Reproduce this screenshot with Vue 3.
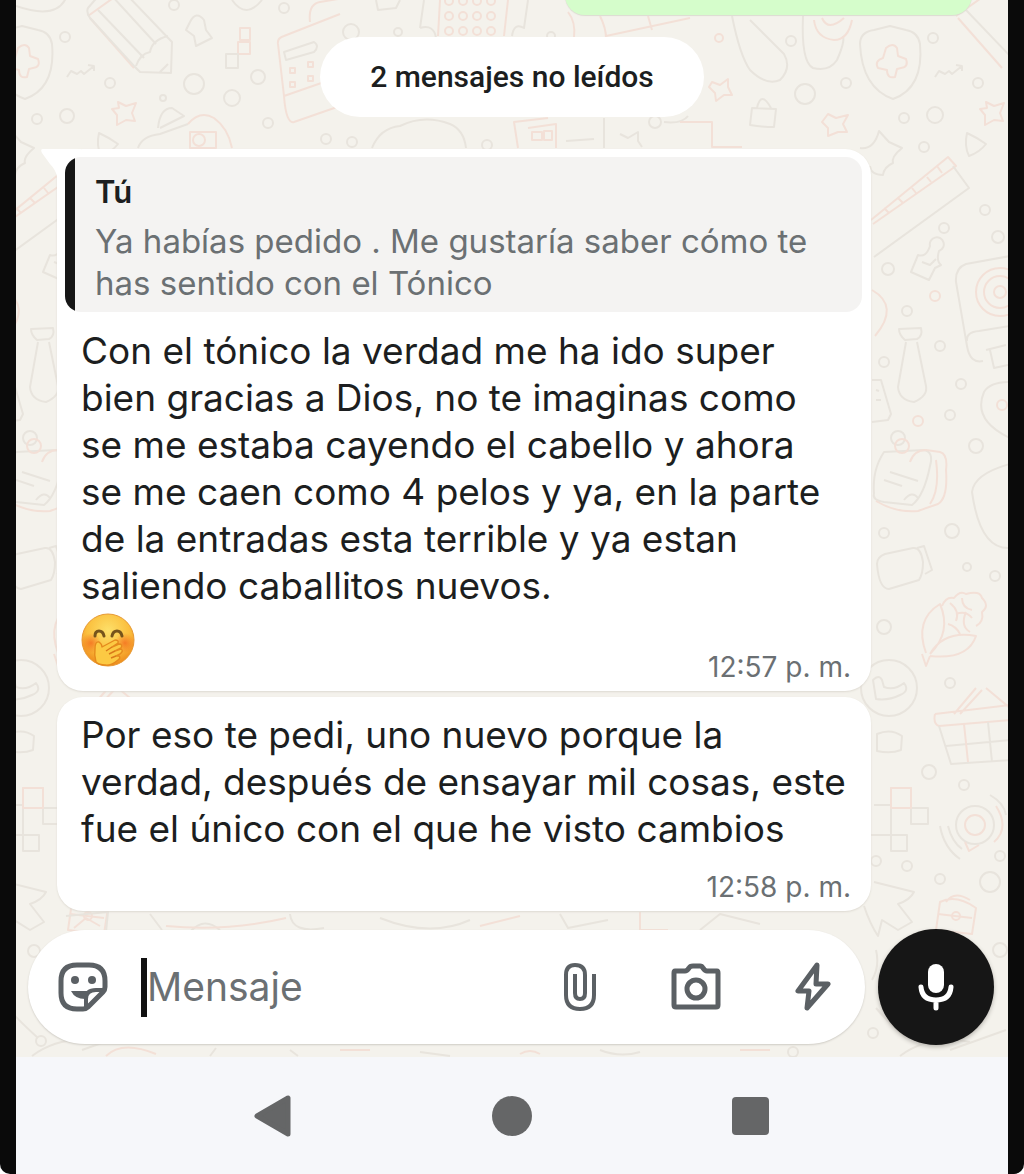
<script setup>
import { ref } from 'vue'

const texto = ref('')

const mensajes = [
  {
    id: 1,
    cita: {
      autor: 'Tú',
      lineas: ['Ya habías pedido . Me gustaría saber cómo te', 'has sentido con el Tónico']
    },
    lineas: [
      'Con el tónico la verdad me ha ido super',
      'bien gracias a Dios, no te imaginas como',
      'se me estaba cayendo el cabello y ahora',
      'se me caen como 4 pelos y ya, en la parte',
      'de la entradas esta terrible y ya estan',
      'saliendo caballitos nuevos.'
    ],
    emoji: true,
    hora: '12:57 p. m.'
  },
  {
    id: 2,
    cita: null,
    lineas: [
      'Por eso te pedi, uno nuevo porque la',
      'verdad, después de ensayar mil cosas, este',
      'fue el único con el que he visto cambios'
    ],
    emoji: false,
    hora: '12:58 p. m.'
  }
]

// x, y, radio
const burbujas = [
  [110, 83, 5], [67, 116, 7], [37, 119, 5], [194, 84, 10], [232, 98, 8], [258, 77, 7],
  [268, 123, 5], [65, 37, 5], [174, 5, 5], [284, 8, 5], [326, 139, 5], [163, 98, 3],
  [351, 32, 8], [398, 32, 4], [352, 142, 5], [487, 145, 5], [551, 36, 4], [655, 122, 6],
  [791, 41, 5], [805, 94, 10], [846, 83, 5], [933, 38, 5], [904, 118, 5], [935, 115, 8],
  [978, 83, 5], [924, 147, 5], [985, 210, 5], [944, 228, 5], [888, 269, 6], [907, 311, 5],
  [998, 237, 6], [940, 346, 5], [884, 362, 5], [961, 384, 5], [950, 415, 5], [976, 446, 7],
  [952, 531, 7], [884, 533, 5], [967, 567, 4], [995, 576, 5], [884, 627, 7], [950, 683, 5],
  [929, 772, 7], [964, 785, 5], [876, 861, 5], [907, 866, 5], [940, 879, 5], [990, 882, 10],
  [1000, 856, 5], [873, 1033, 5], [1000, 950, 7], [34, 951, 6], [41, 1041, 5], [793, 1052, 5]
]
const rosas = [[935, 296, 5], [918, 421, 5], [719, 38, 4]]
</script>

<template>
  <div class="telefono">
    <main class="chat">
      <svg class="fondo" aria-hidden="true">
        <defs>
          <g id="dibujos">
            <path d="M860 44 Q860 32 874 30 L890 26 L906 30 Q918 32 920 44 Q924 88 893 99 Q862 88 860 44z" />
            <path class="rosa" d="M886 48 q7 -6 11 0 l1 8 8 3 q3 8 -5 9 l-4 1 -2 8 q-8 2 -8 -7 l-9 -2 q-4 -7 5 -10z" />
            <path d="M935 77 l4 -6 6 3 4 -3 3 3 10 -8 -6 -1 M962 66 l0 5" />
            <path class="rosa" d="M956 16 L984 -4 M958 18 L1002 68" />
            <path d="M966 10 L1012 58" />
            <path class="rosa" d="M986 102 l8 4 10 -3 -4 10 3 8 -9 -1 -9 5 0 -10 -5 -6 7 -1z" />
            <path d="M967 133 q9 4 19 11 q-6 8 -17 12 q-5 -10 -2 -23z" />
            <path d="M860 148 q14 2 19 -17 l10 11 13 6 q-11 9 -9 15 -9 4 -10 12 -12 0 -13 -9" />
            <path class="rosa" d="M871 220 L948 157 L956 166 L873 224 M884 208 l5 5 M898 198 l5 5 M912 188 l4 5 M927 177 l4 5 M937 166 l5 7" />
            <path d="M953 166 L969 188 L874 257" />
            <path d="M918 255 q8 3 12 -9 a7 7 0 1 1 9 5 q-3 10 2 14 l-6 3 -6 12 -18 -8z M922 262 l8 3 6 -6" />
            <path d="M1010 256 L966 264 Q955 268 956 282 L967 346 Q970 364 983 361 M967 341 Q966 332 979 331 L1010 326 M986 350 l20 -5 M990 350 l4 18 14 -3" />
            <circle class="rosa" cx="1000" cy="292" r="24" />
            <circle class="rosa" cx="1000" cy="292" r="16" />
            <circle class="rosa" cx="1000" cy="292" r="6" />
            <path class="rosa" d="M872 290 Q900 306 875 336" />
            <path d="M899 329 l22 -1 q2 8 -4 11 l-12 1 q-6 -5 -6 -11z M906 342 L898 387 Q899 400 914 402 Q928 396 926 386 L917 342" />
            <path d="M872 380 l9 0 10 34 -3 6 -16 2 M876 390 l3 1 M876 400 l5 0" />
            <path d="M1010 382 Q990 382 984 392 Q972 420 1010 438" />
            <circle class="rosa" cx="1002" cy="405" r="5" />
            <path d="M874 494 Q872 470 884 452 L924 450 Q934 452 930 466 Q924 496 912 505 L884 502 Q872 500 874 494 M890 472 l28 9 M884 480 l18 6 M904 500 q8 -10 14 -2" />
            <path class="rosa" d="M910 462 q4 -12 16 -12 l14 2 q8 2 6 18 q2 28 -8 34 -12 4 -20 7 -22 2 -42 -10 M936 460 q4 30 -6 44" />
            <circle cx="898" cy="438" r="7" />
            <circle class="rosa" cx="902" cy="446" r="7" />
            <path d="M1010 464 Q974 474 972 492 Q980 550 1010 548" />
            <path d="M877 564 q0 -7 8 -10 l28 -6 q8 -1 10 14 0 12 -4 18 l-30 9 q-10 0 -12 -25z M917 548 l7 -2 8 24 -7 4" />
            <path class="rosa" d="M926 653 Q914 620 940 604 Q952 632 930 654 M930 654 Q944 630 976 636 Q968 660 930 656 M930 656 l-4 10 -4 -12 M942 606 q4 -10 12 -8 6 -8 12 -4 14 -4 16 4 8 8 0 14 2 10 -6 14 M950 603 q10 8 6 18 M962 598 q0 10 10 12 M956 614 q10 -4 16 4 M966 612 q-6 14 4 20 M948 624 q8 2 12 10" />
            <circle cx="889" cy="688" r="28" />
            <path d="M873 680 q6 -6 9 0 l2 7 q10 4 20 -4 q6 8 -4 12 -12 6 -24 4 z" />
            <path class="rosa" d="M935 714 L1010 705 M935 714 q-2 10 4 12 L1010 720 M954 714 L976 688 M960 714 L982 690 M986 688 L1010 708" />
            <path d="M939 726 L951 764 L1010 760 M946 746 L1010 740 M988 722 l4 40" />
            <path class="rosa" d="M964 724 l4 38" />
            <path d="M877 734 q14 -6 25 2 l-1 14 q-10 4 -24 1z" />
            <path d="M874 805 h17 v-17 h20 v20 h17 v16 h-17 v-16 h-20 v27 h-20 M891 835 h16 v16 h-16z" />
            <path class="rosa" d="M891 788 h20 v20 h-20z" />
            <circle cx="975" cy="825" r="19" />
            <circle class="rosa" cx="975" cy="825" r="10" />
            <path class="rosa" d="M965 842 l4 9 10 -6 M996 806 q14 22 -2 36" />
            <path d="M940 826 q4 22 20 33 M948 826 q4 16 14 23 M990 795 q14 8 16 20" />
            <path d="M874 882 L914 892 q-4 8 -16 12 l14 18 -14 8 -16 -10 -4 16 q-8 -12 -14 -30" />
            <path class="rosa" d="M940 902 q16 -8 36 6 l-4 26 -36 -4z M938 914 l34 4 M946 902 q8 -12 24 -2" />
            <circle class="rosa" cx="956" cy="916" r="4" />
            <path d="M876 1008 q10 12 30 30 M900 1056 q30 -22 70 -14 M950 1050 l56 -20 M872 980 q8 -14 4 -30" />
          </g>
        </defs>

        <g class="trazo">
          <use href="#dibujos" />
          <use href="#dibujos" x="-868" />

          <path d="M100 -6 L88 8 Q86 12 90 18 L134 66 L140 72 L171 73 L172 42 L126 -6 M112 -4 L156 44 M136 66 q4 -12 14 -14 q2 -12 18 -16 M160 72 l8 -8" />
          <path d="M190 22 q6 -12 14 -2 l2 10 6 8 -8 4 -8 4 -2 -10 -8 -6z" />
          <path class="rosa" d="M240 28 h10 v12 h-10z M238 42 h12 v12 h-12z" />
          <path d="M226 54 h12 v14 h-12z" />
          <path class="rosa" d="M278 44 q-1 -6 6 -8 L340 14 M278 44 L284 96 q2 28 10 26 L340 106 M284 96 L330 80 M310 22 q-2 -18 10 -20 l18 -3" />
          <path d="M284 52 l30 -10 q6 4 0 10 l-28 8z" />
          <path class="rosa" d="M290 68 h5 v5 h-5z M308 62 h5 v5 h-5z M290 82 h5 v5 h-5z M308 76 h5 v5 h-5z" />
          <path d="M158 128 q2 -20 14 -20 l12 8 -24 12 M138 148 q4 -12 22 -14 l28 -10 M232 0 q14 20 30 0 M16 6 q40 14 50 -8" />
          <path class="rosa" d="M188 124 q12 -14 26 -6 14 10 18 30 M190 132 h26 v16 h-26z" />
          <circle class="rosa" cx="199" cy="140" r="6" />
          <path d="M376 0 l2 10 18 -2 4 -8 M424 0 l-4 28 M528 0 l-4 28 q-10 -6 -12 8 M420 28 q14 -4 16 10" />
          <path class="rosa" d="M440 0 l-2 36 M508 0 l-4 36" />
          <g class="rosa" v-for="f in 3" :key="f">
            <circle v-for="c in 4" :key="c" :cx="435 + c * 14" :cy="-14 + f * 15" r="4" />
          </g>
          <path class="rosa" d="M568 12 q8 10 6 26 M600 16 q6 12 6 22 M606 36 L690 18 M648 16 l4 14" />
          <path d="M372 148 q8 -20 28 -22 24 -12 50 -2 14 6 16 24" />
          <path class="rosa" d="M518 148 l-4 -26 34 -4 M528 128 l28 -4 v24 M532 132 h10 v8 h-10z M544 131 h8 v9 h-8z" />
          <path d="M566 141 l28 -2 M604 118 v30 M620 134 l8 4 10 -6 0 9 4 6 M664 122 q18 2 24 -6" />
          <path class="rosa" d="M680 122 h32 v25 h30" />
          <path d="M732 16 q8 40 18 54 16 16 30 10 12 -12 4 -26 L750 20" />
          <path d="M803 16 q-2 46 10 52 16 4 24 -8 q8 -18 6 -24" />
          <path class="rosa" d="M814 20 q2 18 20 20 14 0 18 -20 M822 18 q6 14 22 0" />
          <path class="rosa" d="M712 82 l8 3 8 -6 0 8 4 8 -8 0 -8 6 -1 -8 -6 -6z M828 114 l8 4 12 -3 -5 9 4 8 -9 0 -10 4 0 -8 -6 -6z" />
          <path d="M752 108 l24 1 -2 18 q-12 0 -24 -2z M757 108 q4 -18 14 0" />
          <path d="M66 916 l42 -4 -2 20 M150 914 l12 16 M190 932 q14 -16 30 -2 M290 914 q2 20 34 14 M380 918 q50 20 90 2 M560 914 l8 14 40 -8 M700 930 l20 -16 40 10" />
          <path class="rosa" d="M74 928 l12 -10 14 8 M166 926 q60 6 120 -8 M480 926 l40 -10 M640 912 v18 h28" />
          <path class="rosa" d="M106 1056 q16 -16 50 -2 M340 1050 h30 M520 1054 q10 -6 20 0 M740 1050 h30" />
          <path d="M210 1056 l6 -8 M290 1050 l8 6 M420 1052 l30 4 M600 1050 q20 8 40 2" />

          <circle v-for="(b, i) in burbujas" :key="i" :cx="b[0]" :cy="b[1]" :r="b[2]" />
          <circle v-for="(b, i) in rosas" :key="'r' + i" class="rosa" :cx="b[0]" :cy="b[1]" :r="b[2]" />
        </g>
      </svg>

      <div class="enviado"></div>
      <div class="aviso">2 mensajes no leídos</div>

      <section class="lista">
        <article
          v-for="m in mensajes"
          :key="m.id"
          class="mensaje"
          :class="{ primero: m.cita }"
        >
          <svg v-if="m.cita" class="cola" viewBox="0 0 40 28" aria-hidden="true">
            <path d="M0 0 H40 V28 H16 Q15 21 9 15 L1 4 Q-1 0 2 0z" fill="#fff" />
          </svg>
          <blockquote v-if="m.cita" class="cita">
            <strong>{{ m.cita.autor }}</strong>
            <span v-for="l in m.cita.lineas" :key="l">{{ l }}</span>
          </blockquote>
          <p class="texto">
            <span v-for="l in m.lineas" :key="l">{{ l }}</span>
          </p>
          <footer class="pie">
            <svg v-if="m.emoji" class="emoji" viewBox="0 0 54 54" role="img" aria-label="emoji">
              <defs>
                <radialGradient id="cara" cx="50%" cy="32%" r="68%">
                  <stop offset="0" stop-color="#fde06a" />
                  <stop offset="0.6" stop-color="#fbbf3d" />
                  <stop offset="1" stop-color="#ee8a1c" />
                </radialGradient>
                <radialGradient id="rubor">
                  <stop offset="0" stop-color="#f2661d" stop-opacity="0.75" />
                  <stop offset="1" stop-color="#f2661d" stop-opacity="0" />
                </radialGradient>
              </defs>
              <circle cx="27" cy="27" r="26" fill="url(#cara)" stroke="#e79a35" />
              <circle cx="10" cy="30" r="10" fill="url(#rubor)" />
              <circle cx="44" cy="30" r="10" fill="url(#rubor)" />
              <path
                d="M14 23 Q14 18 18 18 Q22 18 23 23 M31 23 Q32 18 36 18 Q40 18 41 23"
                fill="none"
                stroke="#76541b"
                stroke-width="3"
                stroke-linecap="round"
              />
              <path
                d="M15 49 Q13 42 14 36 Q14 28 18 29 Q21 31 21 34 L34 27 Q38 27 37 30 L31 34 L38 31 Q42 31 40 35 L34 38 L40 36 Q43 38 39 41 L35 43 L38 43 Q40 45 37 47 Q30 53 24 52 Q18 52 15 49z"
                fill="#fcc943"
                stroke="#e58a1d"
                stroke-width="1.4"
                stroke-linejoin="round"
              />
              <path d="M31 34 L25 38 M34 38 L28 41 M35 43 L30 45" stroke="#d9791a" stroke-width="1.4" />
            </svg>
            <time>{{ m.hora }}</time>
          </footer>
        </article>
      </section>

      <form class="barra" @submit.prevent>
        <div class="campo">
          <button type="button" class="icono" aria-label="Stickers">
            <svg width="50" height="50" viewBox="0 0 50 50">
              <path
                d="M19 3 H31 Q47 3 47 19 V25 Q47 28 45 30 L30 45 Q28 47 25 47 H19 Q3 47 3 31 V19 Q3 3 19 3z"
                fill="none"
                stroke="#5b6064"
                stroke-width="5"
              />
              <path d="M46 28 H38 Q28 28 28 37 V46" fill="none" stroke="#5b6064" stroke-width="4" />
              <circle cx="17" cy="18" r="4" fill="#5b6064" />
              <circle cx="34" cy="18" r="4" fill="#5b6064" />
              <path d="M13 29 H37 Q28 31 27 37 Q17 37 13 29z" fill="#5b6064" />
            </svg>
          </button>
          <span class="cursor"></span>
          <input v-model="texto" type="text" placeholder="Mensaje" aria-label="Mensaje" />
          <button type="button" class="icono" aria-label="Adjuntar">
            <svg width="34" height="50" viewBox="0 0 34 50">
              <path
                d="M31 12 V33 Q31 47 17 47 Q3 47 3 33 V13 Q3 3 12 3 Q22 3 22 13 V31 Q22 37 17 37 Q12 37 12 31 V12"
                fill="none"
                stroke="#5b6064"
                stroke-width="4"
              />
            </svg>
          </button>
          <button type="button" class="icono" aria-label="Cámara">
            <svg width="50" height="50" viewBox="0 0 50 50">
              <path
                d="M4 9 H14 Q16 9 18 6 Q19 4 22 4 H29 Q31 4 32 6 Q34 9 36 9 H46 Q47 9 47 11 V43 Q47 45 45 45 H5 Q3 45 3 43 V11 Q3 9 4 9z"
                fill="none"
                stroke="#5b6064"
                stroke-width="5"
                stroke-linejoin="round"
              />
              <circle cx="25" cy="27" r="9" fill="none" stroke="#5b6064" stroke-width="5" />
            </svg>
          </button>
          <button type="button" class="icono" aria-label="Respuestas rápidas">
            <svg width="36" height="50" viewBox="0 0 36 50">
              <path
                d="M22 3 L3 29 H14 L12 46 L33 22 H21z"
                fill="none"
                stroke="#5b6064"
                stroke-width="5"
                stroke-linejoin="round"
              />
            </svg>
          </button>
        </div>
        <button type="button" class="microfono" aria-label="Grabar audio">
          <svg width="36" height="50" viewBox="0 0 36 50">
            <rect x="10" y="2" width="16" height="29" rx="8" fill="#fff" />
            <path
              d="M3 25 Q4 38 18 38 Q32 38 33 25 M18 38 V46"
              fill="none"
              stroke="#fff"
              stroke-width="5"
              stroke-linecap="round"
            />
          </svg>
        </button>
      </form>
    </main>

    <nav class="sistema">
      <button type="button" aria-label="Atrás">
        <svg width="40" height="44" viewBox="0 0 40 44">
          <path d="M4 22 L35 4 V40z" fill="#656667" stroke="#656667" stroke-width="5" stroke-linejoin="round" />
        </svg>
      </button>
      <button type="button" aria-label="Inicio">
        <svg width="42" height="42" viewBox="0 0 42 42"><circle cx="21" cy="21" r="20" fill="#656667" /></svg>
      </button>
      <button type="button" aria-label="Recientes">
        <svg width="38" height="38" viewBox="0 0 38 38"><rect width="37" height="38" rx="4" fill="#656667" /></svg>
      </button>
    </nav>
  </div>
</template>

<style>
body {
  background: #fff;
}
</style>

<style scoped>
.telefono {
  box-sizing: border-box;
  min-height: 100vh;
  display: flex;
  flex-direction: column;
  padding: 0 16px;
  background: #0a0a0a;
  border-radius: 0 0 10px 10px;
  font-family: Inter, 'Open Sans', sans-serif;
  color: #1c1e20;
}

.chat {
  position: relative;
  flex: 1;
  display: flex;
  flex-direction: column;
  overflow: hidden;
  background: #f4f2ec;
}

/* el dibujo usa coordenadas de pantalla, por eso empieza fuera del borde */
.fondo {
  position: absolute;
  top: 0;
  left: -16px;
  width: calc(100% + 16px);
  height: 100%;
}

.trazo,
.fondo defs g {
  fill: none;
  stroke: #e8e4dd;
  stroke-width: 2;
  stroke-linejoin: round;
}

.fondo .rosa {
  stroke: #f3e0d7;
}

.enviado {
  position: relative;
  align-self: flex-end;
  width: 41%;
  height: 40px;
  margin: -25px 36px 0 0;
  background: #d5fdcb;
  border-radius: 26px;
  box-shadow: 0 1px 1px #dcdcd2;
}

.aviso {
  position: relative;
  align-self: center;
  margin: 22px 0 32px;
  padding: 0 50px;
  border-radius: 40px;
  background: #fff;
  font: 500 30px/80px Roboto, sans-serif;
}

.lista {
  position: relative;
  display: flex;
  flex-direction: column;
  gap: 6px;
  margin: 0 137px 0 41px;
}

.mensaje {
  position: relative;
  padding: 14px 20px 8px 24px;
  border-radius: 26px;
  background: #fff;
  box-shadow: 0 1px 2px #dedad2;
}

.primero {
  padding-top: 8px;
}

.cola {
  position: absolute;
  top: 0;
  left: -16px;
  width: 40px;
  height: 28px;
}

.cita {
  position: relative;
  margin: 0 -11px 15px -16px;
  padding: 14px 20px 8px 30px;
  border-radius: 16px;
  background: linear-gradient(90deg, #161616 10px, #f4f3f2 10px);
  font-size: 33px;
  line-height: 42px;
  color: #6b7073;
}

.cita strong {
  display: block;
  margin-bottom: 7px;
  font-size: 31px;
  font-weight: 600;
  line-height: 42px;
  color: #1c1e20;
}

.cita span,
.texto span {
  display: block;
  white-space: nowrap;
}

.texto {
  margin: 0;
  font-size: 37px;
  line-height: 47px;
}

.pie {
  display: flex;
  align-items: flex-end;
  min-height: 51px;
}

.primero .pie {
  min-height: 74px;
}

.emoji {
  align-self: flex-start;
  width: 54px;
  height: 54px;
  margin-top: 4px;
}

.pie time {
  margin-left: auto;
  font-size: 28px;
  line-height: 32px;
  color: #6b7073;
}

.barra {
  position: relative;
  display: flex;
  align-items: center;
  gap: 13px;
  margin: auto 14px 12px 12px;
}

.campo {
  flex: 1;
  min-width: 0;
  height: 114px;
  display: flex;
  align-items: center;
  padding: 0 34px 0 30px;
  box-sizing: border-box;
  border-radius: 57px;
  background: #fff;
  box-shadow: 0 1px 2px #cfccc5;
}

button {
  padding: 0;
  border: 0;
  background: none;
}

button svg {
  display: block;
}

.icono + .icono {
  margin-left: 74px;
}

.cursor {
  width: 6px;
  height: 59px;
  margin-left: 33px;
  background: #111;
}

input {
  flex: 1;
  min-width: 0;
  height: 60px;
  padding: 0;
  border: 0;
  outline: 0;
  background: none;
  font: 400 39px/60px Inter, 'Open Sans', sans-serif;
  color: #1c1e20;
}

input::placeholder {
  color: #6b7073;
  opacity: 1;
}

.microfono {
  width: 116px;
  height: 116px;
  display: grid;
  place-items: center;
  border-radius: 50%;
  background: #161616;
  box-shadow: 0 2px 4px #b9b6b0;
}

.sistema {
  display: grid;
  grid-template-columns: repeat(3, 1fr);
  align-items: center;
  justify-items: center;
  height: 117px;
  padding: 0 138px;
  background: #f6f7fa;
}
</style>
